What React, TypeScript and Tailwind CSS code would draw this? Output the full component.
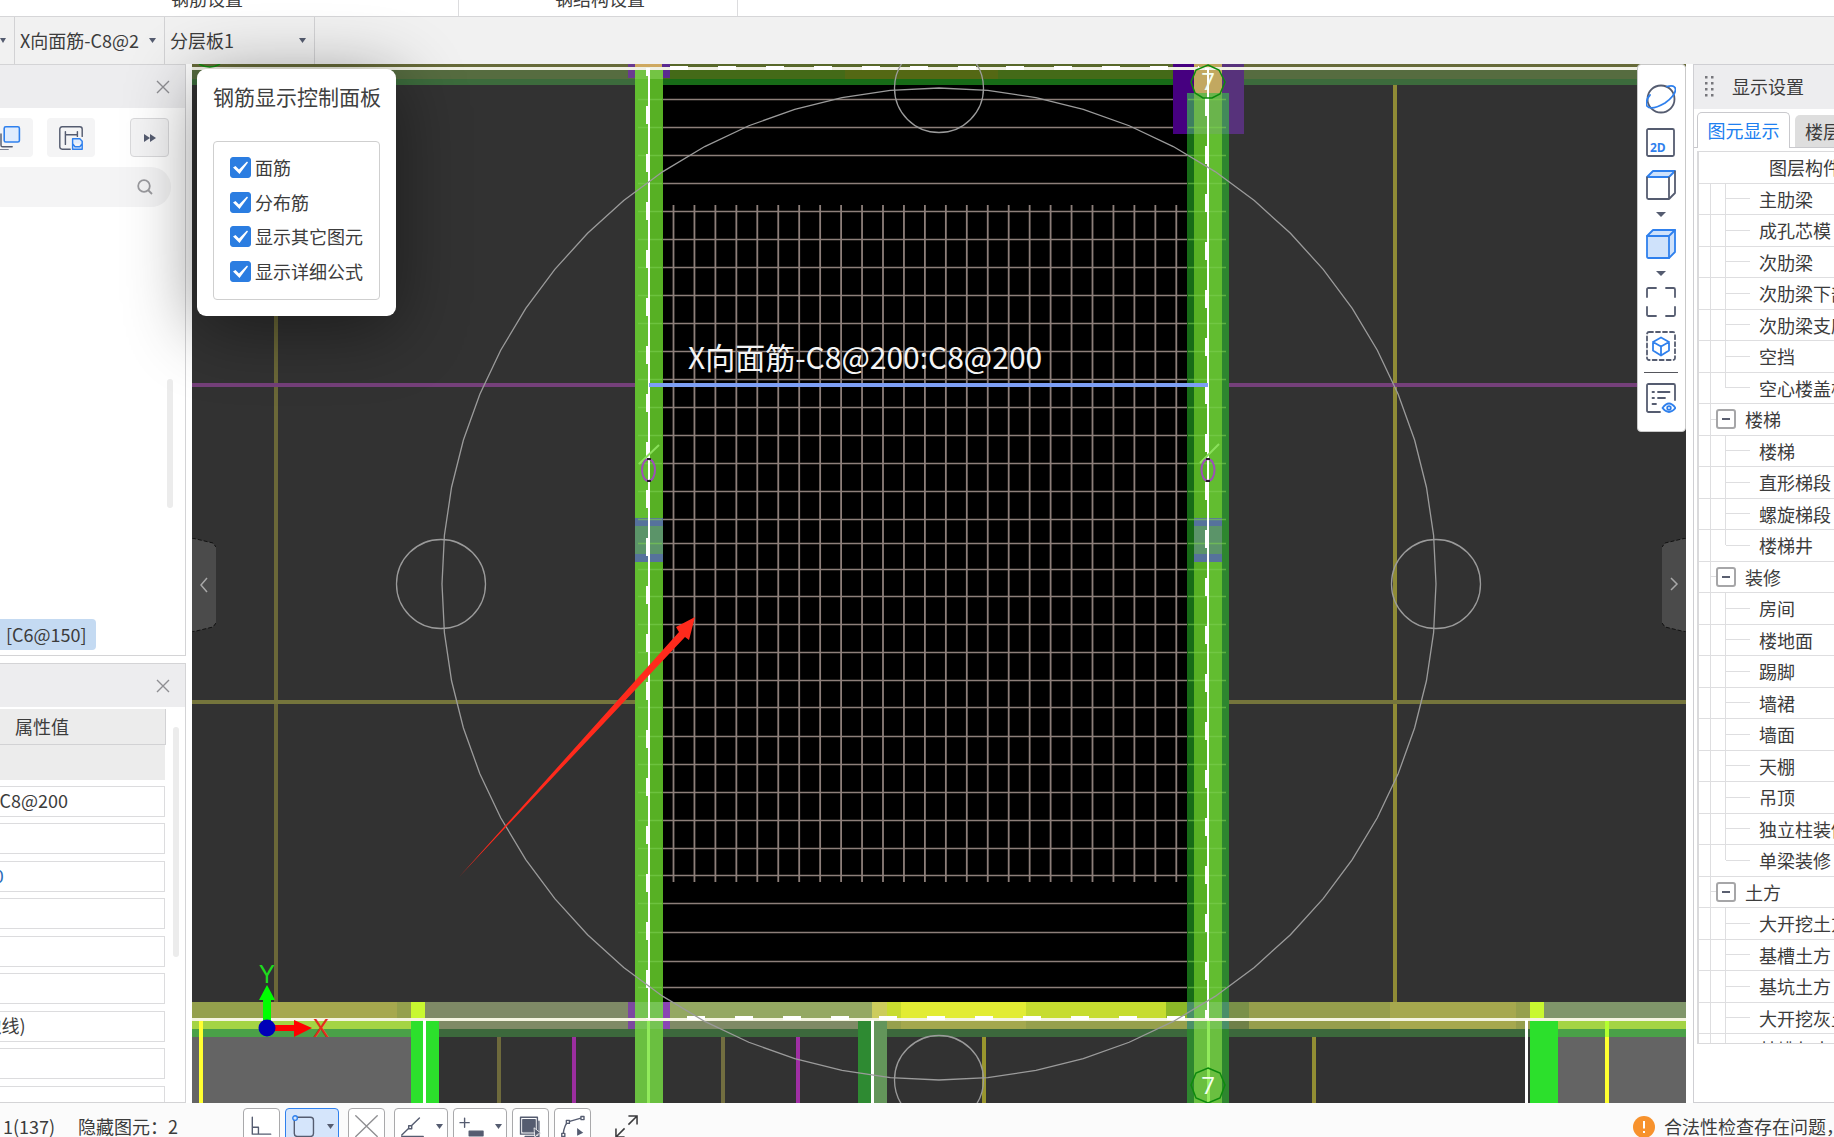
import React from "react";

type Band = [x: number, y: number, w: number, h: number, fill: string];

const INK = "#555c70";
const BLUE = "#2f80ed";

const checks = ["面筋", "分布筋", "显示其它图元", "显示详细公式"];

const properties = [
  { label: "名称", value: "X向面筋-C8@200" },
  { label: "类别", value: "" },
  { label: "钢筋信息", value: "-C8@200", blue: true },
  { label: "左弯折", value: "" },
  { label: "右弯折", value: "" },
  { label: "锚固搭接", value: "" },
  { label: "标注位置", value: "(边线--边线)" },
  { label: "归类名称", value: "" },
  { label: "汇总信息", value: "" },
];

const layers = [
  {
    items: ["主肋梁", "成孔芯模", "次肋梁", "次肋梁下部筋", "次肋梁支座筋", "空挡", "空心楼盖板柱帽"],
  },
  { group: "楼梯", items: ["楼梯", "直形梯段", "螺旋梯段", "楼梯井"] },
  {
    group: "装修",
    items: ["房间", "楼地面", "踢脚", "墙裙", "墙面", "天棚", "吊顶", "独立柱装修", "单梁装修"],
  },
  {
    group: "土方",
    items: ["大开挖土方", "基槽土方", "基坑土方", "大开挖灰土", "基槽灰土", "基坑灰土"],
  },
];

// axis lines lying under the slab
const axes: Band[] = [
  [275, 64, 4, 938, "#6b6838"],
  [1394, 64, 4, 955, "#8f8b36"],
  [193, 383, 1494, 4, "#75407a"],
  [193, 700, 1494, 4, "#75753c"],
  [498, 1021, 4, 83, "#6e6a3c"],
  [573, 1021, 4, 83, "#9c2ea0"],
  [722, 1021, 4, 83, "#726e40"],
  [797, 1021, 4, 83, "#a02fa4"],
  [983, 1021, 4, 83, "#99962e"],
  [1313, 1021, 4, 83, "#928e34"],
];

const topBands: Band[] = [
  [193, 64, 1494, 4, "#666a38"],
  [193, 70, 1494, 9, "#566c40"],
  [193, 79, 1494, 6, "#3c6b3c"],
  [650, 64, 559, 4, "#58682a"],
  [650, 70, 559, 9, "#446a18"],
  [846, 70, 153, 9, "#546814"],
  [650, 79, 559, 6, "#176b17"],
];

const bottomBands: Band[] = [
  [193, 1021, 219, 83, "#646464"],
  [1559, 1021, 128, 83, "#646464"],
  [193, 1002, 79, 17, "#94a04c"],
  [272, 1002, 126, 17, "#a6a84e"],
  [398, 1002, 14, 17, "#94a04c"],
  [412, 1002, 14, 17, "#c8f830"],
  [426, 1002, 203, 17, "#7f8a66"],
  [671, 1002, 202, 17, "#94a862"],
  [873, 1002, 15, 17, "#cccc5c"],
  [888, 1002, 14, 17, "#c8dc30"],
  [902, 1002, 125, 17, "#e2ec34"],
  [1027, 1002, 140, 17, "#c6dc30"],
  [1167, 1002, 21, 17, "#8cb828"],
  [1230, 1002, 20, 17, "#7a9048"],
  [1250, 1002, 141, 17, "#969e4c"],
  [1391, 1002, 126, 17, "#a6a84e"],
  [1517, 1002, 14, 17, "#96a04c"],
  [1531, 1002, 14, 17, "#c8f830"],
  [1545, 1002, 142, 17, "#80966a"],
  [193, 1021, 219, 8, "#a4d444"],
  [440, 1021, 448, 8, "#7f8a66"],
  [888, 1021, 14, 8, "#96a04c"],
  [902, 1021, 125, 8, "#a4a84e"],
  [1027, 1021, 161, 8, "#96a04c"],
  [1230, 1021, 20, 8, "#6f8048"],
  [1250, 1021, 141, 8, "#969e4c"],
  [1391, 1021, 126, 8, "#a6a84e"],
  [1517, 1021, 14, 8, "#969e4c"],
  [1559, 1021, 128, 8, "#a4d444"],
  [193, 1029, 219, 8, "#4aa048"],
  [440, 1029, 1091, 8, "#3c683c"],
  [1559, 1029, 128, 8, "#4aa048"],
  [412, 1021, 28, 83, "#2ce02c"],
  [1531, 1021, 28, 83, "#2ce02c"],
  [859, 1021, 14, 83, "#2e8a32"],
  [873, 1021, 15, 83, "#63955a"],
  [200, 1021, 4, 83, "#ffff30"],
  [1606, 1021, 4, 83, "#ffff30"],
  [1606, 1021, 4, 16, "#b4ff30"],
];

const walls: Band[] = [
  [629, 64, 7, 14, "#6a3a90"],
  [663, 64, 8, 14, "#5a2a90"],
  [629, 1002, 7, 27, "#7c48a0"],
  [663, 1002, 8, 27, "#8a44b4"],
  [636, 64, 27, 4, "#cfa960"],
  [636, 68, 14, 952, "#62bd30"],
  [650, 68, 14, 952, "#57b024"],
  [636, 68, 28, 11, "#74c444"],
  [636, 1002, 28, 27, "#76c454"],
  [636, 1029, 28, 75, "#6abf40"],
  [1174, 64, 35, 70, "#460080"],
  [1209, 64, 36, 70, "#57327b"],
  [1188, 93, 7, 927, "#176b17"],
  [1223, 93, 7, 1011, "#2e862f"],
  [1188, 1020, 7, 84, "#2e862f"],
  [1188, 93, 7, 41, "#3d7f60"],
  [1223, 93, 7, 41, "#438a5a"],
  [1195, 93, 14, 927, "#57b024"],
  [1209, 93, 14, 927, "#62bd30"],
  [1195, 93, 28, 41, "#6ab44c"],
  [1195, 64, 28, 29, "#c2a860"],
  [1188, 1002, 7, 27, "#4a8f68"],
  [1223, 1002, 7, 27, "#4a8f68"],
  [1195, 1002, 28, 27, "#76c454"],
  [1195, 1029, 28, 75, "#6abf40"],
  [636, 518, 28, 8, "#56729c"],
  [636, 526, 28, 28, "#5b9469"],
  [636, 554, 28, 8, "#56729c"],
  [1195, 518, 28, 8, "#56729c"],
  [1195, 526, 28, 28, "#5b9469"],
  [1195, 554, 28, 8, "#56729c"],
];

const outlines: Band[] = [
  [193, 67, 1494, 3, "#f0f0e4"],
  [193, 1018, 1494, 3, "#f4f4e0"],
  [424, 1020, 3, 84, "#ffffff"],
  [872, 1020, 3, 84, "#ffffff"],
  [1526, 1020, 3, 84, "#ffffff"],
  [648, 1021, 3, 83, "#92ea5c"],
  [1208, 1021, 3, 83, "#92ea5c"],
  [649, 68, 2, 952, "#ffffff"],
  [1208, 68, 2, 952, "#ffffff"],
];

const barsY = [
  99, 127, 155, 183, 211, 239, 267, 295, 323, 351, 379, 407, 435, 463, 491, 519, 543, 569, 596, 624,
  652, 680, 707, 736, 764, 792, 820, 848, 875, 903, 932, 961, 987,
];
const barsX = Array.from({ length: 25 }, (_, i) => 674.5 + i * 20.95);

const orbit = Array.from({ length: 64 }, (_, i) => {
  const a = (i / 64) * Math.PI * 2;
  return `${940 + 497 * Math.sin(a)},${584 - 496 * Math.cos(a)}`;
}).join(" ");

const Bands: React.FC<{ data: Band[] }> = ({ data }) => (
  <g shapeRendering="crispEdges">
    {data.map(([x, y, w, h, fill], i) => (
      <rect key={i} x={x} y={y} width={w} height={h} fill={fill} />
    ))}
  </g>
);

const Drawing = () => (
  <svg
    viewBox="193 64 1494 1039"
    preserveAspectRatio="xMidYMid slice"
    className="block h-full w-full"
    fill="none"
  >
    <rect x="193" y="64" width="1494" height="1040" fill="#323232" />
    <Bands data={axes} />
    <rect x="650" y="68" width="559" height="951" fill="#000" />
    <Bands data={topBands} />
    <g stroke="#8d7f7a" strokeWidth="1.6">
      {barsY.map((y) => (
        <path key={y} d={`M650 ${y}.5H1209`} />
      ))}
      {barsX.map((x) => (
        <path key={x} d={`M${x} 205V882`} strokeWidth="1.8" />
      ))}
    </g>
    <Bands data={bottomBands} />
    <Bands data={walls} />
    <g stroke="#7bcf50" strokeWidth="1.5" opacity="0.6">
      {barsY.map((y) => (
        <path key={y} d={`M639 ${y}.5H663M1189 ${y}.5H1227`} />
      ))}
    </g>
    <Bands data={outlines} />
    <g stroke="#fff" strokeWidth="4" strokeDasharray="18 30">
      <path d="M649 106V1019M1208 98V1019M671 68H1200M688 1018H1209" />
    </g>
    <path d="M649 68v8M1208 68v2" stroke="#fff" strokeWidth="4" />
    <path d="M650 385H1209" stroke="#7d9ff5" strokeWidth="4" />
    <path d="M640 464L660 445M1201 463L1220 444" stroke="#8be05c" strokeWidth="2" />
    <g stroke="#9c4fb8" strokeWidth="2">
      <ellipse cx="649.5" cy="470" rx="6.5" ry="11" />
      <ellipse cx="1209" cy="470" rx="6.5" ry="11" />
    </g>
    <path
      d="M648 459h4M648 481h4M1207 459h4M1207 481h4"
      stroke="#2c1a30"
      strokeWidth="2"
    />
    <g stroke="#9b9b9b" strokeWidth="1.3">
      <polygon points={orbit} />
      <circle cx="940" cy="88" r="44.5" />
      <circle cx="940" cy="1080" r="44.5" />
      <circle cx="442" cy="584" r="44.5" />
      <circle cx="1437" cy="584" r="44.5" />
    </g>
    <g stroke="#0d8a0d" strokeWidth="1.5">
      <polygon points="1209,65 1220,70 1226,82 1221,94 1213,98 1204,98 1196,93 1192,82 1197,70" />
      <polygon points="1209,1068 1221,1073 1226,1085 1221,1098 1209,1103 1197,1098 1192,1085 1197,1073" />
      <path d="M200 64Q211 70 221 64" />
    </g>
    <g fill="#f4fff0" fontFamily="'Open Sans', sans-serif" fontSize="24" textAnchor="middle">
      <text x="1209" y="90">7</text>
      <text x="1209" y="1094">7</text>
    </g>
    <text x="689" y="369" fill="#f4f4f4" fontSize="30" fontFamily="'Noto Sans CJK SC', sans-serif">
      X向面筋-C8@200:C8@200
    </text>
    <path d="M460 877L680 632L677 627L696 617L690 640L686 637Z" fill="#ff2a1c" />
    {/* view direction marker */}
    <path d="M264 1028V1000H260L268 985L276 1000H272V1028Z" fill="#00ff00" />
    <path d="M271 1025H295V1020L313 1028L295 1037V1031H271Z" fill="#ff0000" />
    <circle cx="268" cy="1028" r="8.5" fill="#0000b8" />
    <g fontFamily="Inter, sans-serif" fontSize="24" textAnchor="middle">
      <text x="268" y="983" fill="#1edb1e">Y</text>
      <text x="322" y="1037" fill="#e52b1c">X</text>
    </g>
  </svg>
);

const Icon: React.FC<{ children: React.ReactNode; className?: string }> = ({
  children,
  className = "h-[30px] w-[30px]",
}) => (
  <svg
    viewBox="0 0 30 30"
    className={className}
    fill="none"
    stroke={INK}
    strokeWidth="1.8"
    strokeLinecap="round"
    strokeLinejoin="round"
  >
    {children}
  </svg>
);

const Caret = ({ className = "h-[5px] w-[10px]" }) => (
  <svg viewBox="0 0 10 5" className={className} preserveAspectRatio="none">
    <path d="M0 0H10L5 5Z" fill={INK} />
  </svg>
);

const Close = () => (
  <button aria-label="关闭" className="flex h-5 w-5 items-center justify-center">
    <svg viewBox="0 0 14 14" className="h-3.5 w-3.5" stroke="#8e8e92" strokeWidth="1.4">
      <path d="M1 1L13 13M13 1L1 13" />
    </svg>
  </button>
);

const ToolSelect: React.FC<{ label: string; value: string }> = ({ label, value }) => (
  <label className="relative flex w-[150px] shrink-0 items-center border-r border-[#d2d2d4]">
    <select
      aria-label={label}
      defaultValue={value}
      className="h-full w-full appearance-none overflow-hidden pr-4 pl-[5px] text-[18px] outline-none"
    >
      <option>{value}</option>
    </select>
    <span className="pointer-events-none absolute right-2">
      <Caret className="h-[5px] w-[7px]" />
    </span>
  </label>
);

const ViewTools = () => (
  <div className="absolute top-0 right-0 flex w-[49px] flex-col items-center rounded border border-[#c9c9c9] bg-white pt-[19px] pr-0.5 pb-[18px]">
    <button aria-label="动态观察">
      <Icon className="block h-[30px] w-[30px]">
        <circle cx="15" cy="15" r="13.5" />
        <path d="M21 2.500C26 1 29 2 29.500 5C30 9 25 15 19 19C12 23 4 26 1 22C-1 19 2 13 4 11" stroke={BLUE} />
      </Icon>
    </button>
    <button aria-label="二维" className="mt-3.5">
      <Icon className="block h-[30px] w-[30px]">
        <rect x="1" y="1" width="27" height="27" rx="1.5" />
        <text
          x="4"
          y="24"
          fontSize="12"
          fontWeight="700"
          fontFamily="'Open Sans', sans-serif"
          fill={BLUE}
          stroke="none"
        >
          2D
        </text>
      </Icon>
    </button>
    <button aria-label="俯视" className="mt-3 flex flex-col items-center gap-3">
      <Icon>
        <path d="M1 7L7 1H29L23 7Z" fill="#cfe2fb" stroke={BLUE} />
        <path d="M1 7.500V27.500Q1 29 2.500 29H23V7.500M23 29L29 23V1.500" />
      </Icon>
      <Caret />
    </button>
    <button aria-label="实体" className="mt-3 flex flex-col items-center gap-3">
      <Icon>
        <path d="M1 7L7 1H29V23L23 29H2.500Q1 29 1 27.500Z" fill="#cfe2fb" stroke={BLUE} />
        <path d="M1 7H23V29M23 7L29 1" stroke={BLUE} />
      </Icon>
      <Caret />
    </button>
    <button aria-label="全屏" className="mt-[11px]">
      <Icon className="block h-[30px] w-[30px]">
        <path d="M1 10V2.500Q1 1 2.500 1H10M20 1H27.500Q29 1 29 2.500V10M29 20V27.500Q29 29 27.500 29H20M10 29H2.500Q1 29 1 27.500V20" />
      </Icon>
    </button>
    <button aria-label="局部三维" className="mt-3.5">
      <Icon className="block h-[30px] w-[30px]">
        <rect x="1" y="1" width="28" height="28" rx="2" strokeDasharray="4 3" />
        <path
          d="M15 6.500L23 11V19.500L15 24.500L7 19.500V11ZM7 11L15 15.500L23 11M15 15.500V24.500"
          stroke={BLUE}
        />
      </Icon>
    </button>
    <div className="mt-[11px] h-px w-[34px] bg-[#55565c]" />
    <button aria-label="图元信息" className="mt-2.5">
      <Icon className="block h-[30px] w-[30px]">
        <path d="M14 29H2.500Q1 29 1 27.500V2.500Q1 1 2.500 1H27.500Q29 1 29 2.500V17" />
        <path d="M6.500 9H8M12 9H23.500M6.500 15H8M12 15H19M6.500 21H10" />
        <path d="M16.500 25Q23 16 29.500 25Q23 33 16.500 25Z" stroke={BLUE} />
        <circle cx="23" cy="25" r="1.800" stroke={BLUE} />
      </Icon>
    </button>
  </div>
);

const ControlPanel = () => (
  <section className="absolute top-[5px] left-[5px] z-10 w-[199px] rounded-[9px] bg-white px-4 pt-2.5 pb-4 shadow-[0_12px_70px_rgba(0,0,0,0.45)]">
    <h2 className="text-[21px] leading-[34px] whitespace-nowrap text-[#404040]">钢筋显示控制面板</h2>
    <div className="mt-7 flex h-[159px] flex-col justify-between rounded border border-[#cfcfcf] pt-[15px] pb-[17px] pl-4">
      {checks.map((name) => (
        <label key={name} className="flex h-[21px] items-center gap-1 text-[18px]">
          <span className="grid h-[21px] w-[21px] place-items-center">
            <input
              type="checkbox"
              defaultChecked
              className="peer col-start-1 row-start-1 h-[21px] w-[21px] appearance-none rounded-[3px] border border-[#b5b5b5] checked:border-[#2b7de1] checked:bg-[#2b7de1]"
            />
            <svg
              viewBox="0 0 21 21"
              className="pointer-events-none col-start-1 row-start-1 hidden h-[21px] w-[21px] peer-checked:block"
              fill="#fff"
            >
              <path d="M3 10.500L5.500 9L9 12.500L17 4.500L18 5.500L9.500 17Z" />
            </svg>
          </span>
          <span className="whitespace-nowrap">{name}</span>
        </label>
      ))}
    </div>
  </section>
);

const ComponentList = () => (
  <section className="flex h-[592px] shrink-0 flex-col overflow-hidden border-t border-r border-b border-[#d4d4d6]">
    <header className="flex h-[43px] shrink-0 items-center justify-end bg-[#ededef] pr-3">
      <Close />
    </header>
    <div className="mt-2.5 flex h-[39px] justify-end pr-4">
      <button aria-label="复制" className="flex w-12 shrink-0 items-center justify-center rounded bg-[#f4f4f5]">
        <Icon className="h-6 w-6">
          <path d="M5 10V24Q5 26 7 26H19M1 14V28Q1 30 3 30H14" />
          <rect x="9" y="1" width="19" height="19" rx="2" fill="#e0ecfd" stroke={BLUE} strokeWidth="2" />
        </Icon>
      </button>
      <button
        aria-label="存档"
        className="ml-3.5 flex w-12 shrink-0 items-center justify-center rounded bg-[#f4f4f5]"
      >
        <Icon className="h-6 w-6">
          <path d="M14 29H4Q1 29 1 26V4Q1 1 4 1H26Q29 1 29 4V13M8 7V23M8 11H23M23 7V13" />
          <path d="M17 16H26L29 19V29H17ZM17 22L20 26H26L29 22" stroke={BLUE} fill="#e0ecfd" />
        </Icon>
      </button>
      <button
        aria-label="更多"
        className="ml-[35px] flex w-[39px] shrink-0 items-center justify-center rounded border border-[#d9d9db] bg-[#f4f4f5]"
      >
        <svg viewBox="0 0 12 8" className="h-2 w-3" fill={INK}>
          <path d="M0 0L6 4L0 8ZM6 0L12 4L6 8Z" />
        </svg>
      </button>
    </div>
    <label className="mt-2.5 mr-3.5 flex h-10 items-center rounded-r-full bg-[#f4f4f5] pr-[18px]">
      <input type="search" aria-label="搜索构件" className="w-full min-w-0 bg-transparent outline-none" />
      <svg viewBox="0 0 16 16" className="h-4 w-4 shrink-0" fill="none" stroke="#9a9a9e" strokeWidth="1.800">
        <circle cx="7" cy="7" r="5.800" />
        <path d="M11 11L15 15" />
      </svg>
    </label>
    <div className="flex min-h-0 flex-1 justify-between">
      <div className="flex items-end pb-[5px]">
        <span className="flex h-[31px] w-24 items-center rounded-r bg-[#c4daf2] pl-1.5 text-[18px]">[C6@150]</span>
      </div>
      <div className="mt-[172px] mr-3 h-[129px] w-1.5 rounded-full bg-[#ececec]" />
    </div>
  </section>
);

const PropertyList = () => (
  <section className="mt-[7px] flex min-h-0 flex-1 flex-col overflow-hidden border-t border-r border-b border-[#d4d4d6]">
    <header className="flex h-[43px] shrink-0 items-center justify-end bg-[#ededef] pr-3">
      <Close />
    </header>
    <div className="flex min-h-0 flex-1 justify-between overflow-hidden pt-0.5">
      <div className="w-[166px]">
        <h3 className="flex h-9 items-center border-r border-b border-[#d2d2d4] bg-[#ececec] pl-[15px] text-[18px]">
          属性值
        </h3>
        <div className="mr-px mb-[6px] h-[35px] bg-[#ececec]" />
        <div className="mr-px -ml-20">
          {properties.map((p) => (
            <input
              key={p.label}
              aria-label={p.label}
              defaultValue={p.value}
              className={`block h-[31px] w-full border border-[#dcdcde] pb-[3px] pl-2 text-[18px] outline-none odd:mb-1.5 even:mb-[7px] ${
                p.blue ? "text-[#2b6cb8]" : ""
              }`}
            />
          ))}
        </div>
      </div>
      <div className="mt-[18px] mr-1.5 h-[230px] w-1.5 rounded-full bg-[#ececec]" />
    </div>
  </section>
);

const LayerTree = () => (
  <table className="w-full border-collapse">
    <thead>
      <tr className="h-[31px] border-b border-[#dedee0]">
        <th className="p-0 pl-[70px] text-left text-[18px] font-normal whitespace-nowrap">图层构件</th>
      </tr>
    </thead>
    <tbody>
      {layers.flatMap(({ group, items }) => [
        ...(group
          ? [
              <tr key={group} className="h-[31px] border-b border-[#dedee0] even:h-8">
                <td className="h-px p-0">
                  <div className="flex h-full items-center">
                    <span className="h-full w-3 border-r border-[#dedee0]" />
                    <span className="h-px w-[5px] bg-[#dedee0]" />
                    <button
                      aria-label={`折叠${group}`}
                      className="flex h-5 w-5 items-center justify-center rounded-[3px] border-2 border-[#a6a6a8] bg-white"
                    >
                      <span className="h-0.5 w-2 bg-[#5a5f70]" />
                    </button>
                    <span className="pl-[9px] text-[18px] leading-none whitespace-nowrap">{group}</span>
                  </div>
                </td>
              </tr>,
            ]
          : []),
        ...items.map((name, i) => (
          <tr key={`${group}-${name}`} className="h-[31px] border-b border-[#dedee0] even:h-8">
            <td className="h-px p-0">
              <div className="flex h-full items-center">
                <span className="h-full w-3 border-r border-[#dedee0]" />
                <span className="h-full w-[14px]" />
                <span
                  className={`w-px bg-[#dedee0] ${
                    i === items.length - 1 ? "h-1/2 self-start" : "h-full"
                  }`}
                />
                <span className="h-px w-6 shrink-0 bg-[#dedee0]" />
                <span className="pl-[9px] text-[18px] leading-none whitespace-nowrap">{name}</span>
              </div>
            </td>
          </tr>
        )),
      ])}
    </tbody>
  </table>
);

const DisplaySettings = () => (
  <aside className="flex w-[141px] shrink-0 flex-col overflow-hidden border-t border-b border-l border-[#cfcfd3]">
    <header className="flex h-11 shrink-0 items-center bg-[#ededef] pb-0.5 pl-2.5">
      <svg viewBox="0 0 10 22" className="h-[22px] w-2.5" fill="#77777c">
        {[1, 7, 13, 19].map((y) => (
          <path key={y} d={`M1 ${y}h2.500v2.500h-2.500zM7 ${y}h2.500v2.500h-2.500z`} />
        ))}
      </svg>
      <h2 className="pl-[18px] text-[18px] whitespace-nowrap">显示设置</h2>
    </header>
    <div className="flex h-[39px] shrink-0 items-end border-b border-[#c9c9cd] pl-[3px]">
      <button className="-mb-px h-9 w-[93px] shrink-0 rounded-t-[5px] border border-b-0 border-[#c9c9cd] bg-white text-[18px] whitespace-nowrap text-[#2080f0]">
        图元显示
      </button>
      <button className="ml-[5px] h-8 w-[92px] shrink-0 rounded-t-[5px] bg-[#dedede] text-[18px] whitespace-nowrap">
        楼层显示
      </button>
    </div>
    <div className="mt-[3px] mb-[58px] ml-[3px] min-h-0 flex-1 overflow-hidden border-t border-b border-l-2 border-[#dadadc]">
      <LayerTree />
    </div>
  </aside>
);

const statusTools = [
  {
    label: "正交",
    icon: <path d="M3 3V25H27M3 16H11V25" />,
  },
  {
    label: "选择",
    menu: true,
    active: true,
    icon: (
      <>
        <rect x="3" y="3" width="25" height="25" rx="4" />
        <circle cx="4" cy="4" r="3" stroke={BLUE} fill="#d5e5fb" />
      </>
    ),
  },
  {
    label: "取消",
    icon: <path d="M1 1L29 28M29 1L1 28" stroke="#8f8f92" />,
  },
  {
    label: "角度",
    menu: true,
    icon: (
      <>
        <path d="M1 26L24 4M1 28H29" />
        <rect x="10" y="14" width="4" height="4" fill="#fff" />
      </>
    ),
  },
  {
    label: "偏移",
    menu: true,
    icon: (
      <>
        <path d="M6 4V16M0 10H12" />
        <rect x="12" y="21" width="18" height="6" fill={INK} />
      </>
    ),
  },
  {
    label: "复制图层",
    icon: (
      <>
        <path d="M2 3H24V25H2Z" />
        <rect x="5" y="6" width="16" height="16" fill={INK} />
        <path d="M26 8V28H8" />
        <path d="M20 17L29 24L24 25L21 29Z" fill={INK} stroke="#fff" strokeWidth="1" />
      </>
    ),
  },
  {
    label: "折线",
    icon: (
      <>
        <path d="M3 24Q4 14 9 9L26 4" />
        <rect x="1" y="24" width="4" height="4" fill="#fff" />
        <rect x="7" y="7" width="4" height="4" fill="#fff" />
        <rect x="26" y="2" width="4" height="4" fill="#fff" />
        <path d="M21 17L29 23L21 27Z" fill={INK} stroke="none" />
      </>
    ),
  },
];

const StatusBar = () => (
  <footer className="flex h-[34px] shrink-0 items-start bg-[#fbfbfb] pt-[5px] pl-[3px] text-[18px] leading-[37px]">
    <span className="w-[75px]">1(137)</span>
    <span className="w-[165px] whitespace-nowrap">隐藏图元：2</span>
    <div className="flex gap-[5px]">
      {statusTools.map(({ label, icon, menu, active }) => (
        <button
          key={label}
          aria-label={label}
          className={`flex h-[37px] items-center rounded border ${
            menu ? "w-[54px] gap-3 pl-1.5" : "w-[37px] justify-center"
          } ${active ? "mr-1 border-[#2f80ed] bg-[#d5e5fb]" : "border-[#a9a9ab] bg-white"} ${
            label === "取消" ? "mr-1" : ""
          }`}
        >
          <Icon className="h-[23px] w-[23px] overflow-visible">{icon}</Icon>
          {menu && <Caret className="h-[5px] w-[7px]" />}
        </button>
      ))}
    </div>
    <button aria-label="最大化" className="ml-6 flex h-[37px] items-center">
      <svg viewBox="0 0 24 24" className="h-[23px] w-[23px]" fill="none" stroke="#3a3a3c" strokeWidth="1.600">
        <path d="M14 1H23V10M23 1L14 10M10 23H1V14M1 23L10 14" />
      </svg>
    </button>
    <p className="ml-auto flex w-[201px] items-center gap-[9px] overflow-hidden whitespace-nowrap">
      <svg viewBox="0 0 22 22" className="h-[22px] w-[22px] shrink-0">
        <circle cx="11" cy="11" r="11" fill="#f7922d" />
        <path d="M11 5V12.500M11 15V17" stroke="#fff" strokeWidth="2" />
      </svg>
      合法性检查存在问题，请查看
    </p>
  </footer>
);

export default function App() {
  return (
    <div className="flex h-screen flex-col overflow-hidden bg-white font-['Noto_Sans_CJK_SC',sans-serif] text-[#3c3c3c]">
      <div className="flex h-[17px] shrink-0 items-end border-b border-[#d6d6d8] text-center text-[18px]">
        <span className="flex h-4 w-[459px] items-end justify-end overflow-hidden border-r border-[#dcdcde] pr-[215px] pb-[9px] leading-[18px]">
          钢筋设置
        </span>
        <span className="flex h-4 w-[279px] items-end justify-end overflow-hidden border-r border-[#dcdcde] pr-[92px] pb-[9px] leading-[18px]">
          钢结构设置
        </span>
      </div>
      <div className="flex h-[47px] shrink-0 bg-[#f1f1f1]">
        <button aria-label="楼层" className="flex w-[15px] items-center border-r border-[#d2d2d4]">
          <Caret className="h-[5px] w-[6px]" />
        </button>
        <ToolSelect label="构件" value="X向面筋-C8@2" />
        <ToolSelect label="分层" value="分层板1" />
      </div>
      <main className="flex min-h-0 flex-1">
        <div className="flex w-[186px] shrink-0 flex-col">
          <ComponentList />
          <PropertyList />
        </div>
        <div className="relative mr-[7px] ml-1.5 min-w-0 flex-1">
          <Drawing />
          <ControlPanel />
          <ViewTools />
          <button aria-label="收起左侧" className="absolute top-[474px] left-0">
            <svg viewBox="0 0 24 94" className="block h-[94px] w-6">
              <path d="M0 0L21 5L24 9V85L21 89L0 94Z" fill="#4b4b4b" />
              <path d="M0 0L21 5L24 9M24 85L21 89L0 94" stroke="#111" strokeDasharray="4 2" fill="none" />
              <path d="M15 40L9 47L15 54" stroke="#a8a8a8" strokeWidth="1.500" fill="none" />
            </svg>
          </button>
          <button aria-label="收起右侧" className="absolute top-[474px] right-0">
            <svg viewBox="0 0 24 94" className="block h-[94px] w-6">
              <path d="M24 0L3 5L0 9V85L3 89L24 94Z" fill="#4b4b4b" />
              <path d="M24 0L3 5L0 9M0 85L3 89L24 94" stroke="#111" strokeDasharray="4 2" fill="none" />
              <path d="M9 40L15 46L9 52" stroke="#a8a8a8" strokeWidth="1.500" fill="none" />
            </svg>
          </button>
        </div>
        <DisplaySettings />
      </main>
      <StatusBar />
    </div>
  );
}
